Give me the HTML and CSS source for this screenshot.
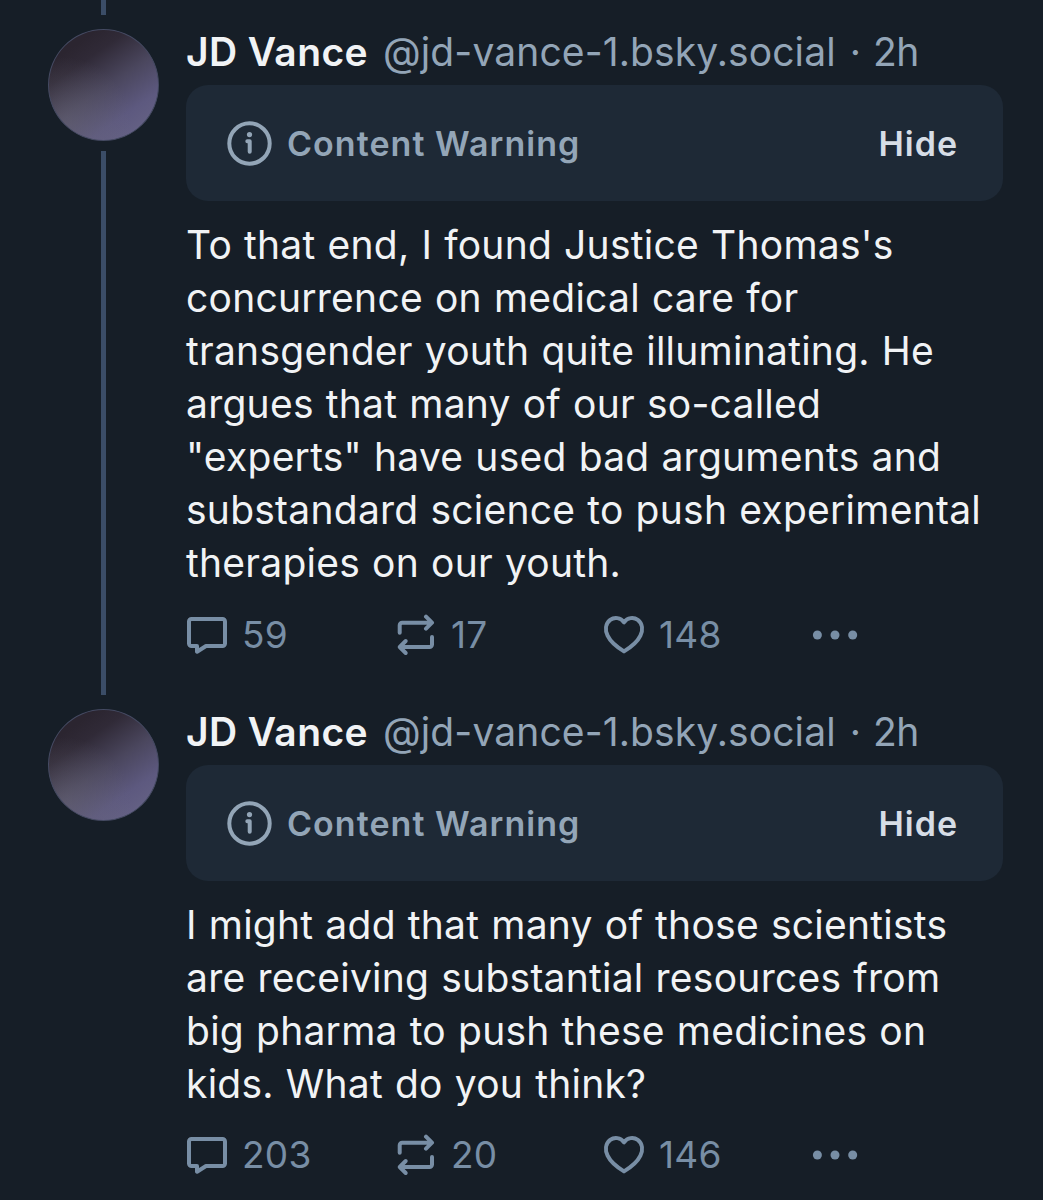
FILE: index.html
```
<!DOCTYPE html>
<html lang="en">
<head>
  <meta charset="UTF-8">
  <meta name="viewport" content="width=device-width, initial-scale=1.0">
  <title>Thread</title>
  <link rel="stylesheet" href="styles.css">
</head>
<body>
  <!-- shared icons -->
  <svg class="sprite" width="0" height="0">
    <symbol id="info" viewBox="0 0 46 46">
      <circle cx="23.500" cy="23.500" r="20.2" fill="none" stroke="currentColor" stroke-width="4"/>
      <circle cx="23.500" cy="14.600" r="2.6" fill="currentColor"/>
      <path d="M21.300 21.300h2.400v10.500" fill="none" stroke="currentColor" stroke-width="4" stroke-linecap="round" stroke-linejoin="round"/>
    </symbol>
    <symbol id="reply" viewBox="0 0 42 42">
      <path d="M5.500 5h31a2.500 2.500 0 0 1 2.500 2.500v22a2.500 2.500 0 0 1-2.500 2.500H20l-9 5.700v-5.700H5.500A2.500 2.500 0 0 1 3 29.500v-22A2.500 2.500 0 0 1 5.500 5z" fill="none" stroke="currentColor" stroke-width="4" stroke-linejoin="round"/>
    </symbol>
    <symbol id="repost" viewBox="0 0 42 42">
      <g fill="none" stroke="currentColor" stroke-width="4" stroke-linecap="round" stroke-linejoin="round">
        <path d="M4.700 18.700v-7.500a2.500 2.500 0 0 1 2.500-2.500H36M31 2.700l6 6-6 6"/>
        <path d="M37 23v7.500a2.500 2.500 0 0 1-2.500 2.500H5.500M10.700 27l-6 6 6 6"/>
      </g>
    </symbol>
    <symbol id="like" viewBox="0 0 42 42">
      <path d="M21 8.300C17.500 3.500 11.500 2.800 7.200 5.900C2.200 9.800 2 16.200 4.600 21.700C7.600 28 14 33.200 21 37.400C28 33.200 34.400 28 37.400 21.700C40 16.200 39.800 9.800 34.800 5.900C30.500 2.800 24.500 3.500 21 8.300z" fill="none" stroke="currentColor" stroke-width="4" stroke-linejoin="round"/>
    </symbol>
    <symbol id="more" viewBox="0 0 48 42">
      <g fill="currentColor">
        <circle cx="6.400" cy="21" r="4.500"/>
        <circle cx="24" cy="21" r="4.500"/>
        <circle cx="41.700" cy="21" r="4.500"/>
      </g>
    </symbol>
  </svg>

  <div class="thread">
    <article class="post has-reply">
      <div class="side">
        <div class="line line-top"></div>
        <div class="avatar"></div>
        <div class="line line-bottom"></div>
      </div>
      <div class="main">
        <div class="meta"><b class="name">JD Vance</b><span class="handle">@jd-vance-1.bsky.social</span><span class="dot">·</span><span class="time">2h</span></div>
        <div class="warning">
          <svg class="info"><use href="#info"/></svg>
          <span class="warning-label">Content Warning</span>
          <span class="hide">Hide</span>
        </div>
        <p class="text">To that end, I found Justice Thomas's<br>
          concurrence on medical care for<br>
          transgender youth quite illuminating. He<br>
          argues that many of our so-called<br>
          "experts" have used bad arguments and<br>
          substandard science to push experimental<br>
          therapies on our youth.</p>
        <div class="actions">
          <span class="action"><svg class="icon"><use href="#reply"/></svg>59</span>
          <span class="action"><svg class="icon"><use href="#repost"/></svg>17</span>
          <span class="action"><svg class="icon"><use href="#like"/></svg>148</span>
          <span class="action"><svg class="icon more"><use href="#more"/></svg></span>
        </div>
      </div>
    </article>

    <article class="post">
      <div class="side">
        <div class="line line-top"></div>
        <div class="avatar"></div>
      </div>
      <div class="main">
        <div class="meta"><b class="name">JD Vance</b><span class="handle">@jd-vance-1.bsky.social</span><span class="dot">·</span><span class="time">2h</span></div>
        <div class="warning">
          <svg class="info"><use href="#info"/></svg>
          <span class="warning-label">Content Warning</span>
          <span class="hide">Hide</span>
        </div>
        <p class="text">I might add that many of those scientists<br>
          are receiving substantial resources from<br>
          big pharma to push these medicines on<br>
          kids. What do you think?</p>
        <div class="actions">
          <span class="action"><svg class="icon"><use href="#reply"/></svg>203</span>
          <span class="action"><svg class="icon"><use href="#repost"/></svg>20</span>
          <span class="action"><svg class="icon"><use href="#like"/></svg>146</span>
          <span class="action"><svg class="icon more"><use href="#more"/></svg></span>
        </div>
      </div>
    </article>
  </div>
</body>
</html>
```
FILE: styles.css
```
* { box-sizing: border-box; }
body { margin: 0; background: #161e27; color: #f1f3f5; font-family: Inter, sans-serif; font-size: 39px; overflow: hidden; }
.sprite { display: block; height: 0; }
.thread { height: 1200px; overflow: hidden; }

.post { display: flex; gap: 27px; padding-left: 48px; }
.has-reply { height: 680px; }
.side { display: flex; flex-direction: column; align-items: center; width: 111px; }
.line { width: 5px; background: #3b4d67; }
.line-top { height: 15px; margin-bottom: 14px; }
.line-bottom { flex: 1; margin-top: 10px; }
.avatar {
  width: 111px; height: 112px; border-radius: 50%; border: 1px solid #454a62;
  background: radial-gradient(circle at 15% 85%, rgba(110, 108, 122, 0.45), transparent 50%), linear-gradient(145deg, #2b2530 18%, #302a37 30%, #4a465d 52%, #5d597f 74%, #6a6788 100%);
}

.main { width: 817px; padding-top: 26px; white-space: nowrap; }
.meta { display: flex; height: 59px; line-height: 52px; }
.name { font-weight: 600; letter-spacing: 0.4px; margin-right: 15px; }
.handle { color: #93a5b7; letter-spacing: 0.12px; }
.dot { color: #93a5b7; margin: 0 12px 0 14px; }
.time { color: #93a5b7; letter-spacing: -0.5px; }

.warning { display: flex; align-items: center; height: 116px; padding: 0 45px 0 40px; border-radius: 22px; background: #1e2936; font-size: 34px; font-weight: 600; }
.info { width: 46px; height: 46px; margin-right: 15px; color: #93a5b7; }
.warning-label { flex: 1; color: #93a5b7; letter-spacing: 1.05px; }
.hide { color: #d6dde6; letter-spacing: 1px; }

.text { margin: 17px 0 0; line-height: 53px; letter-spacing: 0.25px; word-spacing: 0.8px; }

.actions { display: grid; grid-template-columns: 209px 208px 208px 1fr; align-items: center; height: 44px; margin-top: 23px; color: #788ea5; font-size: 37px; line-height: 44px; }
.has-reply .actions { margin-top: 24px; }
.action { display: flex; align-items: center; gap: 14px; letter-spacing: 0.3px; }
.icon { width: 42px; height: 42px; }
.more { width: 48px; }
```
